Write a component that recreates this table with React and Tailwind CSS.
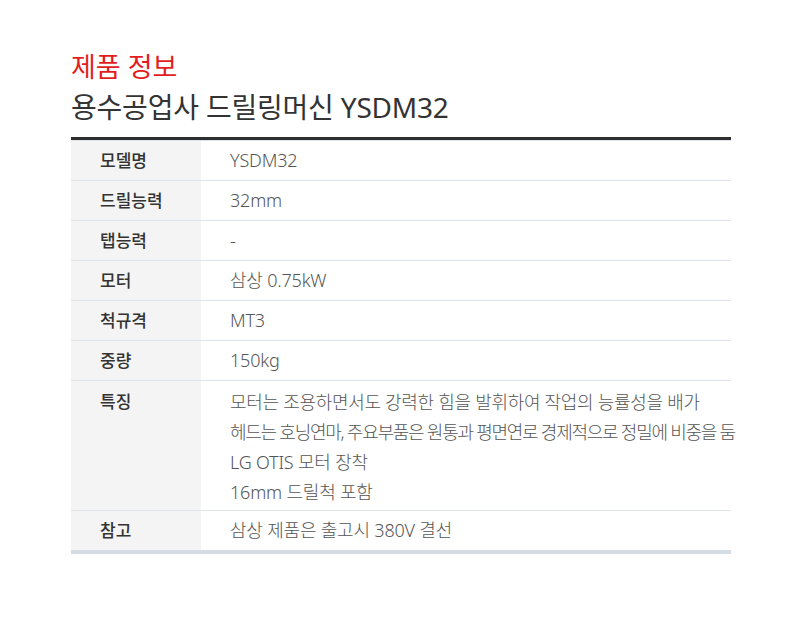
const specs = [
  { label: "모델명", value: ["YSDM32"] },
  { label: "드릴능력", value: ["32mm"] },
  { label: "탭능력", value: ["-"] },
  { label: "모터", value: ["삼상 0.75kW"] },
  { label: "척규격", value: ["MT3"] },
  { label: "중량", value: ["150kg"] },
  {
    label: "특징",
    value: [
      "모터는 조용하면서도 강력한 힘을 발휘하여 작업의 능률성을 배가",
      "헤드는 호닝연마, 주요부품은 원통과 평면연로 경제적으로 정밀에 비중을 둠",
      "LG OTIS 모터 장착",
      "16mm 드릴척 포함",
    ],
  },
  { label: "참고", value: ["삼상 제품은 출고시 380V 결선"] },
];

// the second feature line is set tighter in the original
const lineTracking = ["tracking-[-0.3px]", "tracking-[-1.25px]", "tracking-[-0.2px]", "tracking-[-0.2px]"];

function SpecRow({ label, value, last }) {
  const multi = value.length > 1;
  return (
    <div className={`flex ${last ? "" : "border-b border-[#dfe3ea]"}`}>
      <div
        className={`w-[130px] shrink-0 bg-[#f4f4f4] pl-[29px] text-[17px] font-medium text-[#333] ${
          multi ? "pt-[6px] leading-[30px]" : "flex h-[39px] items-center"
        }`}
      >
        {label}
      </div>
      <div
        className={`flex-1 pl-[29px] text-[18px] font-light tracking-[-0.2px] text-[#555] ${
          multi ? "pt-[6px] pb-[3px] leading-[30px]" : "flex h-[39px] items-center"
        }`}
      >
        {multi ? (
          <div>
            {value.map((line, i) => (
              <div key={line} className={`whitespace-nowrap ${lineTracking[i]}`}>
                {line}
              </div>
            ))}
          </div>
        ) : (
          value[0]
        )}
      </div>
    </div>
  );
}

export default function App() {
  return (
    <div
      className="min-h-[618px] w-[800px] bg-white pl-[71px] pt-[50px]"
      style={{ fontFamily: '"Noto Sans", "Noto Sans CJK KR", sans-serif' }}
    >
      <h2 className="text-[27px] leading-[34px] text-[#e31d1d]">제품 정보</h2>
      <h1 className="mt-[4px] text-[28px] leading-[38px] tracking-[-0.2px] text-[#333]">
        용수공업사 드릴링머신 YSDM32
      </h1>

      <div className="mt-[11px] w-[660px] border-t-[3px] border-b-[4px] border-t-[#2e2e2e] border-b-[#d6dce4]">
        <div className="h-[1px] bg-[#dfe3ea]" />
        {specs.map((row, i) => (
          <SpecRow key={row.label} {...row} last={i === specs.length - 1} />
        ))}
      </div>
    </div>
  );
}
